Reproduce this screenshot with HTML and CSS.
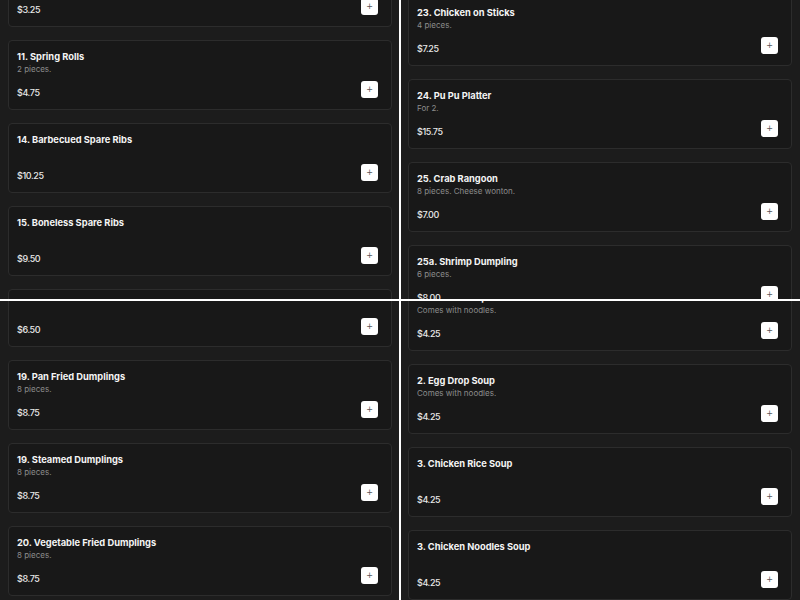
FILE: index.html
```html
<!DOCTYPE html>
<html>
<head>
<meta charset="utf-8">
<link rel="stylesheet" href="styles.css">
</head>
<body>
<div class="screen">
  <div class="pane">
    <div class="list list-tl">
      <div class="card"><div class="title">10. Egg Roll</div><div class="desc">1 piece.</div><div class="row"><span class="price">$3.25</span><button class="add">+</button></div></div>
      <div class="card"><div class="title">11. Spring Rolls</div><div class="desc">2 pieces.</div><div class="row"><span class="price">$4.75</span><button class="add">+</button></div></div>
      <div class="card"><div class="title">14. Barbecued Spare Ribs</div><div class="desc"></div><div class="row"><span class="price">$10.25</span><button class="add">+</button></div></div>
      <div class="card"><div class="title">15. Boneless Spare Ribs</div><div class="desc"></div><div class="row"><span class="price">$9.50</span><button class="add">+</button></div></div>
      <div class="card"><div class="title">16. Beef Teriyaki</div><div class="desc"></div><div class="row"><span class="price">$6.50</span><button class="add">+</button></div></div>
    </div>
  </div>
  <div class="pane">
    <div class="list list-tr">
      <div class="card"><div class="title">23. Chicken on Sticks</div><div class="desc">4 pieces.</div><div class="row"><span class="price">$7.25</span><button class="add">+</button></div></div>
      <div class="card"><div class="title">24. Pu Pu Platter</div><div class="desc">For 2.</div><div class="row"><span class="price">$15.75</span><button class="add">+</button></div></div>
      <div class="card"><div class="title">25. Crab Rangoon</div><div class="desc">8 pieces. Cheese wonton.</div><div class="row"><span class="price">$7.00</span><button class="add">+</button></div></div>
      <div class="card"><div class="title">25a. Shrimp Dumpling</div><div class="desc">6 pieces.</div><div class="row"><span class="price">$8.00</span><button class="add">+</button></div></div>
    </div>
  </div>
  <div class="pane">
    <div class="list list-bl">
      <div class="card"><div class="title">18. Beef Teriyaki</div><div class="desc"></div><div class="row"><span class="price">$6.50</span><button class="add">+</button></div></div>
      <div class="card"><div class="title">19. Pan Fried Dumplings</div><div class="desc">8 pieces.</div><div class="row"><span class="price">$8.75</span><button class="add">+</button></div></div>
      <div class="card"><div class="title">19. Steamed Dumplings</div><div class="desc">8 pieces.</div><div class="row"><span class="price">$8.75</span><button class="add">+</button></div></div>
      <div class="card"><div class="title">20. Vegetable Fried Dumplings</div><div class="desc">8 pieces.</div><div class="row"><span class="price">$8.75</span><button class="add">+</button></div></div>
    </div>
  </div>
  <div class="pane">
    <div class="list list-br">
      <div class="card"><div class="title">1. Wonton Soup</div><div class="desc">Comes with noodles.</div><div class="row"><span class="price">$4.25</span><button class="add">+</button></div></div>
      <div class="card"><div class="title">2. Egg Drop Soup</div><div class="desc">Comes with noodles.</div><div class="row"><span class="price">$4.25</span><button class="add">+</button></div></div>
      <div class="card"><div class="title">3. Chicken Rice Soup</div><div class="desc"></div><div class="row"><span class="price">$4.25</span><button class="add">+</button></div></div>
      <div class="card"><div class="title">3. Chicken Noodles Soup</div><div class="desc"></div><div class="row"><span class="price">$4.25</span><button class="add">+</button></div></div>
    </div>
  </div>
  <div class="divider-v"></div>
  <div class="divider-h"></div>
</div>
</body>
</html>
```

FILE: styles.css
```css
* { box-sizing: border-box; }
html, body { margin: 0; padding: 0; background: #1c1c1c; }
body { font-family: "Inter", "Liberation Sans", sans-serif; }
.screen {
  position: relative;
  width: 800px;
  height: 600px;
  display: grid;
  grid-template-columns: 400px 400px;
  grid-template-rows: 300px 300px;
  overflow: hidden;
}
.pane {
  overflow: hidden;
  background: #1c1c1c;
  padding: 0 8px;
}
.list { display: flex; flex-direction: column; gap: 13px; }
.list-tl { margin-top: -43px; }
.list-tr { margin-top: -4px; }
.list-bl { margin-top: -23px; }
.list-br { margin-top: -19px; }
.card {
  height: 70px;
  flex: none;
  background: #181818;
  border: 1px solid #2c2c2c;
  border-radius: 4px;
  padding: 10px 13px 11px 8px;
  display: flex;
  flex-direction: column;
}
.title {
  font-size: 9.3px;
  line-height: 12px;
  font-weight: 700;
  color: #f4f4f4;
  white-space: nowrap;
}
.desc {
  font-size: 8px;
  line-height: 12px;
  height: 12px;
  color: #8c8c8c;
}
.row {
  margin-top: auto;
  display: flex;
  justify-content: space-between;
  align-items: flex-end;
}
.price {
  font-size: 9px;
  line-height: 10px;
  font-weight: 500;
  letter-spacing: -0.4px;
  color: #e8e8e8;
}
.add {
  width: 17px;
  height: 17px;
  padding: 0;
  border: none;
  border-radius: 3px;
  background: #ffffff;
  color: #555;
  font-family: "DejaVu Sans", sans-serif;
  font-size: 8px;
  line-height: 17px;
  text-align: center;
}
.divider-v {
  position: absolute;
  left: 399px;
  top: 0;
  width: 2px;
  height: 600px;
  background: #ffffff;
}
.divider-h {
  position: absolute;
  left: 0;
  top: 299px;
  width: 800px;
  height: 2px;
  background: #ffffff;
}
```
